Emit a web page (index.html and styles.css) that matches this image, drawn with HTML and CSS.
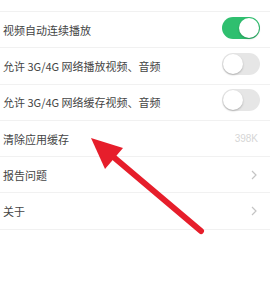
FILE: index.html
```html
<!DOCTYPE html>
<html lang="zh-CN">
<head>
    <meta charset="UTF-8">
    <title>设置</title>
    <link rel="stylesheet" href="styles.css">
</head>
<body>
    <div class="settings">
        <div class="row">
            <span class="label">视频自动连续播放</span>
            <span class="switch on"><span class="knob"></span></span>
        </div>
        <div class="row">
            <span class="label">允许 3G/4G 网络播放视频、音频</span>
            <span class="switch"><span class="knob"></span></span>
        </div>
        <div class="row">
            <span class="label">允许 3G/4G 网络缓存视频、音频</span>
            <span class="switch"><span class="knob"></span></span>
        </div>
        <div class="row">
            <span class="label">清除应用缓存</span>
            <span class="value">398K</span>
        </div>
        <div class="row">
            <span class="label">报告问题</span>
            <svg class="chevron" width="6" height="10" viewBox="0 0 6 10"><polyline points="1,1 5,5 1,9" fill="none" stroke="#c4c4c4" stroke-width="1.2"/></svg>
        </div>
        <div class="row">
            <span class="label">关于</span>
            <svg class="chevron" width="6" height="10" viewBox="0 0 6 10"><polyline points="1,1 5,5 1,9" fill="none" stroke="#c4c4c4" stroke-width="1.2"/></svg>
        </div>
    </div>
    <!-- red annotation arrow -->
    <svg class="arrow" width="270" height="284" viewBox="0 0 270 284">
        <line x1="201" y1="231" x2="104" y2="149" stroke="#e61e2b" stroke-width="6" stroke-linecap="round"/>
        <polygon points="91,138 123,148 105,169" fill="#e61e2b"/>
    </svg>
</body>
</html>
```

FILE: styles.css
```css
html, body{
    margin: 0;
    padding: 0;
    background: #fff;
    font-family: "Noto Sans CJK SC", "Noto Sans", sans-serif;
}

body{
    position: relative;
    width: 270px;
    height: 284px;
    overflow: hidden;
}

.settings{
    padding-top: 11px;
}

.row{
    display: flex;
    align-items: center;
    justify-content: space-between;
    height: 35.3px;
    border-top: 1px solid #f1f1f1;
    padding: 0 10px 0 3px;
}

.row:last-child{
    border-bottom: 1px solid #f1f1f1;
}

.label{
    font-size: 11px;
    color: #444;
}

.switch{
    position: relative;
    width: 38px;
    height: 22px;
    border-radius: 11px;
    background: #e6e6e6;
    margin-top: -4px;
}

.switch .knob{
    position: absolute;
    top: 1px;
    left: 1px;
    width: 20px;
    height: 20px;
    border-radius: 50%;
    background: #fff;
    box-shadow: 0 1px 2px rgba(0, 0, 0, 0.25);
}

.switch.on{
    background: #2fbf6f;
}

.switch.on .knob{
    left: 17px;
}

.value{
    font-family: "Liberation Sans", sans-serif;
    font-size: 10px;
    color: #d6d6d6;
    margin-right: 2px;
}

.chevron{
    margin-right: 3px;
}

.arrow{
    position: absolute;
    top: 0;
    left: 0;
}
```
